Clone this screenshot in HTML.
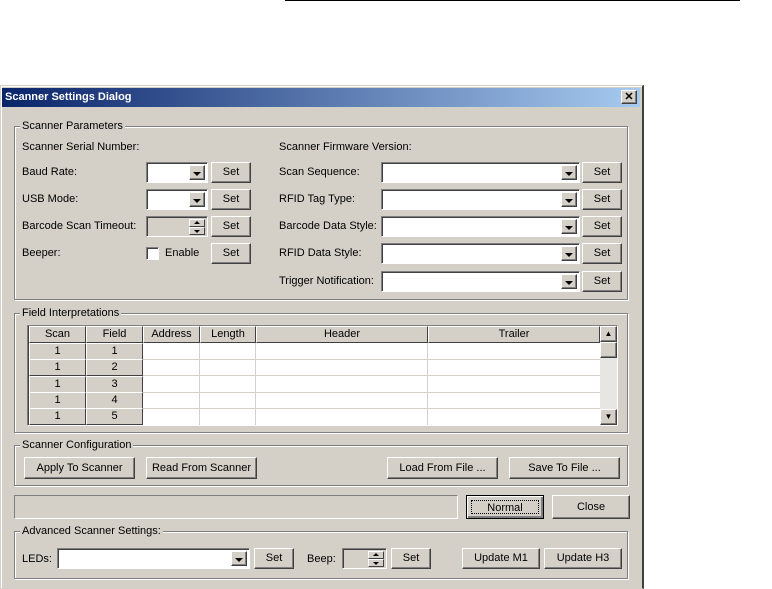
<!DOCTYPE html>
<html><head><style>
body{margin:0;width:772px;height:589px;background:#fff;position:relative;overflow:hidden;font-family:"Liberation Sans",sans-serif;font-size:11px;color:#000}
div,span{position:absolute;box-sizing:border-box}
.dlg{left:0;top:85px;width:644px;height:504px;background:#d4d0c8;border:1px solid #d4d0c8;border-right:2px solid #404040;box-shadow:inset 1px 1px #fff}
.title{left:2px;top:88px;width:638px;height:19px;background:linear-gradient(90deg,#0a246a,#a6caf0);color:#fff;font-weight:bold;font-size:11px;line-height:19px;padding-left:3px}
.grp{border:1px solid #808080;box-shadow:1px 1px 0 #fff,inset 1px 1px 0 #fff}
.gl{background:#d4d0c8;padding:0 2px;line-height:12px}
.btn{background:#d4d0c8;border:1px solid;border-color:#fff #404040 #404040 #fff;box-shadow:inset -1px -1px #808080;text-align:center;line-height:18px}
.cmb{background:#fff;border:1px solid;border-color:#808080 #fff #fff #808080;box-shadow:inset 1px 1px #404040}
.arr{top:2px;right:2px;width:16px;bottom:2px;background:#d4d0c8;border:1px solid;border-color:#fff #404040 #404040 #fff;box-shadow:inset -1px -1px #808080}
.arr:after{content:"";position:absolute;left:3px;top:6px;width:0;height:0;border-left:4px solid transparent;border-right:4px solid transparent;border-top:4px solid #000}
.sp{right:2px;width:16px;height:8px;background:#d4d0c8;border:1px solid;border-color:#fff #404040 #404040 #fff}
.up:after{content:"";position:absolute;left:4px;top:1px;border-left:3px solid transparent;border-right:3px solid transparent;border-bottom:3px solid #000}
.dn:after{content:"";position:absolute;left:4px;top:2px;border-left:3px solid transparent;border-right:3px solid transparent;border-top:3px solid #000}
.lbl{line-height:13px}
.th{background:#d4d0c8;border:1px solid;border-color:#fff #404040 #404040 #fff;text-align:center;line-height:15px}
</style></head><body>
<div style="left:285px;top:0;width:455px;height:1px;background:#000"></div>
<div class="dlg"></div>
<div class="title">Scanner Settings Dialog</div>
<div class="btn" style="left:621px;top:90px;width:16px;height:14px;line-height:12px;font-weight:bold;font-size:11px">✕</div>

<div class="grp" style="left:14px;top:126px;width:614px;height:174px"></div>
<span class="gl" style="left:20px;top:120px">Scanner Parameters</span>
<span class="lbl" style="left:22px;top:141px">Scanner Serial Number:</span>
<span class="lbl" style="left:22px;top:166px">Baud Rate:</span>
<span class="lbl" style="left:22px;top:193px">USB Mode:</span>
<span class="lbl" style="left:22px;top:220px">Barcode Scan Timeout:</span>
<span class="lbl" style="left:22px;top:247px">Beeper:</span>
<div class="cmb" style="left:146px;top:162px;width:62px;height:21px"><div class="arr"></div></div>
<div class="cmb" style="left:146px;top:189px;width:62px;height:21px"><div class="arr"></div></div>
<div class="cmb" style="left:146px;top:216px;width:62px;height:21px;background:#d4d0c8"><div class="sp up" style="top:2px"></div><div class="sp dn" style="top:10px"></div></div>
<div class="cmb" style="left:146px;top:247px;width:13px;height:13px"></div>
<span class="lbl" style="left:165px;top:247px">Enable</span>
<div class="btn" style="left:211px;top:162px;width:40px;height:21px">Set</div>
<div class="btn" style="left:211px;top:189px;width:40px;height:21px">Set</div>
<div class="btn" style="left:211px;top:216px;width:40px;height:21px">Set</div>
<div class="btn" style="left:211px;top:243px;width:40px;height:21px">Set</div>

<span class="lbl" style="left:279px;top:141px">Scanner Firmware Version:</span>
<span class="lbl" style="left:279px;top:166px">Scan Sequence:</span>
<span class="lbl" style="left:279px;top:193px">RFID Tag Type:</span>
<span class="lbl" style="left:279px;top:220px">Barcode Data Style:</span>
<span class="lbl" style="left:279px;top:247px">RFID Data Style:</span>
<span class="lbl" style="left:279px;top:275px">Trigger Notification:</span>
<div class="cmb" style="left:381px;top:162px;width:199px;height:21px"><div class="arr"></div></div>
<div class="cmb" style="left:381px;top:189px;width:199px;height:21px"><div class="arr"></div></div>
<div class="cmb" style="left:381px;top:216px;width:199px;height:21px"><div class="arr"></div></div>
<div class="cmb" style="left:381px;top:243px;width:199px;height:21px"><div class="arr"></div></div>
<div class="cmb" style="left:381px;top:271px;width:199px;height:21px"><div class="arr"></div></div>
<div class="btn" style="left:582px;top:162px;width:40px;height:21px">Set</div>
<div class="btn" style="left:582px;top:189px;width:40px;height:21px">Set</div>
<div class="btn" style="left:582px;top:216px;width:40px;height:21px">Set</div>
<div class="btn" style="left:582px;top:243px;width:40px;height:21px">Set</div>
<div class="btn" style="left:582px;top:271px;width:40px;height:21px">Set</div>

<div class="grp" style="left:14px;top:313px;width:614px;height:120px"></div>
<span class="gl" style="left:20px;top:307px">Field Interpretations</span>
<div style="left:27px;top:325px;width:591px;height:101px;background:#fff;border:1px solid;border-color:#808080 #fff #fff #808080;box-shadow:inset 1px 1px #404040"></div>
<div class="th" style="left:29px;top:326px;width:57px;height:17px">Scan</div>
<div class="th" style="left:86px;top:326px;width:57px;height:17px">Field</div>
<div class="th" style="left:143px;top:326px;width:57px;height:17px">Address</div>
<div class="th" style="left:200px;top:326px;width:56px;height:17px">Length</div>
<div class="th" style="left:256px;top:326px;width:172px;height:17px">Header</div>
<div class="th" style="left:428px;top:326px;width:172px;height:17px">Trailer</div>
<div class="th" style="left:29px;top:343px;width:57px;height:17px">1</div><div class="th" style="left:86px;top:343px;width:57px;height:17px">1</div>
<div class="th" style="left:29px;top:359px;width:57px;height:17px">1</div><div class="th" style="left:86px;top:359px;width:57px;height:17px">2</div>
<div class="th" style="left:29px;top:376px;width:57px;height:17px">1</div><div class="th" style="left:86px;top:376px;width:57px;height:17px">3</div>
<div class="th" style="left:29px;top:392px;width:57px;height:17px">1</div><div class="th" style="left:86px;top:392px;width:57px;height:17px">4</div>
<div class="th" style="left:29px;top:408px;width:57px;height:17px">1</div><div class="th" style="left:86px;top:408px;width:57px;height:17px">5</div>
<div style="left:143px;top:359px;width:457px;height:1px;background:#d4d0c8"></div>
<div style="left:143px;top:375px;width:457px;height:1px;background:#d4d0c8"></div>
<div style="left:143px;top:392px;width:457px;height:1px;background:#d4d0c8"></div>
<div style="left:143px;top:408px;width:457px;height:1px;background:#d4d0c8"></div>
<div style="left:199px;top:343px;width:1px;height:82px;background:#d4d0c8"></div>
<div style="left:255px;top:343px;width:1px;height:82px;background:#d4d0c8"></div>
<div style="left:427px;top:343px;width:1px;height:82px;background:#d4d0c8"></div>
<div style="left:600px;top:326px;width:17px;height:99px;background:#e8e6e2"></div>
<div class="btn" style="left:600px;top:326px;width:17px;height:16px;line-height:14px;font-size:8px">▲</div>
<div class="btn" style="left:600px;top:342px;width:17px;height:16px"></div>
<div class="btn" style="left:600px;top:409px;width:17px;height:16px;line-height:14px;font-size:8px">▼</div>

<div class="grp" style="left:14px;top:445px;width:614px;height:41px"></div>
<span class="gl" style="left:20px;top:439px">Scanner Configuration</span>
<div class="btn" style="left:24px;top:457px;width:111px;height:22px;line-height:20px">Apply To Scanner</div>
<div class="btn" style="left:146px;top:457px;width:111px;height:22px;line-height:20px">Read From Scanner</div>
<div class="btn" style="left:387px;top:457px;width:111px;height:22px;line-height:20px">Load From File ...</div>
<div class="btn" style="left:509px;top:457px;width:111px;height:22px;line-height:20px">Save To File ...</div>

<div style="left:14px;top:495px;width:444px;height:24px;border:1px solid;border-color:#808080 #fff #fff #808080"></div>
<div class="btn" style="left:466px;top:495px;width:78px;height:24px;line-height:20px;border:1px solid #000;box-shadow:inset 1px 1px #fff,inset -2px -2px #808080"><span style="left:4px;top:4px;right:4px;bottom:4px;border:1px dotted #000;line-height:14px;position:absolute">Normal</span></div>
<div class="btn" style="left:552px;top:495px;width:78px;height:24px;line-height:22px">Close</div>

<div class="grp" style="left:14px;top:531px;width:614px;height:48px"></div>
<span class="gl" style="left:20px;top:525px">Advanced Scanner Settings:</span>
<span class="lbl" style="left:22px;top:553px">LEDs:</span>
<div class="cmb" style="left:57px;top:548px;width:193px;height:21px"><div class="arr"></div></div>
<div class="btn" style="left:254px;top:548px;width:40px;height:21px">Set</div>
<span class="lbl" style="left:307px;top:553px">Beep:</span>
<div class="cmb" style="left:342px;top:548px;width:45px;height:21px;background:#d4d0c8"><div class="sp up" style="top:2px"></div><div class="sp dn" style="top:10px"></div></div>
<div class="btn" style="left:391px;top:548px;width:40px;height:21px">Set</div>
<div class="btn" style="left:462px;top:548px;width:78px;height:21px">Update M1</div>
<div class="btn" style="left:544px;top:548px;width:78px;height:21px">Update H3</div>
</body></html>
